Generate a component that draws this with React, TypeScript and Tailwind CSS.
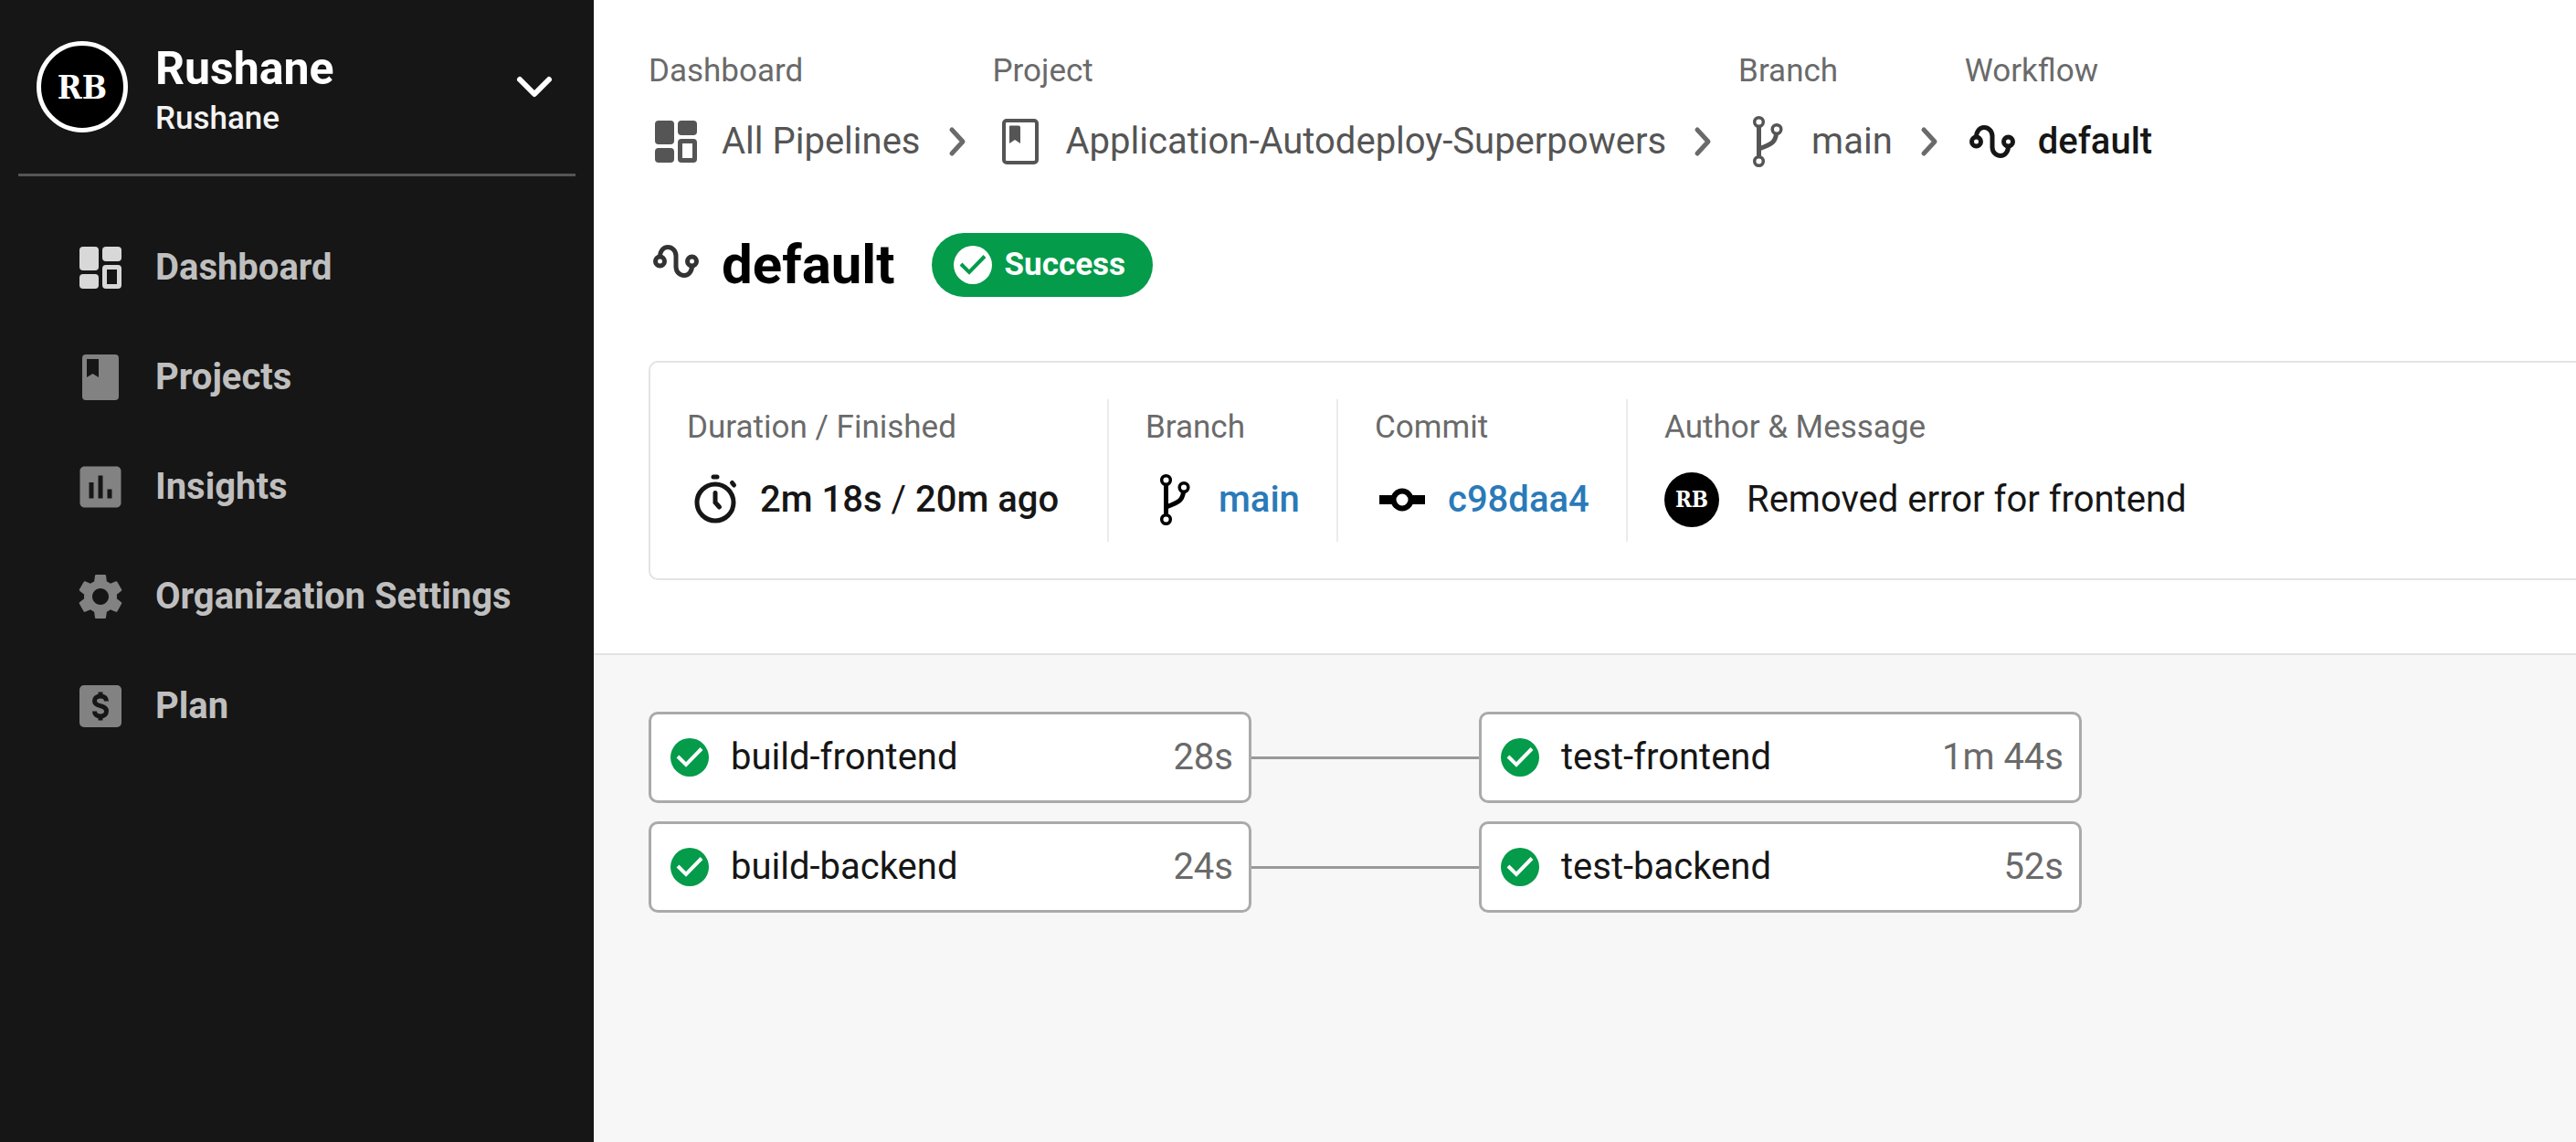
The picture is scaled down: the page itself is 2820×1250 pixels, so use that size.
import type { ReactNode } from "react";
import { MdAssessment, MdSettings } from "react-icons/md";

type IconProps = { className?: string };

function DashboardIcon({ className = "" }: IconProps) {
  return (
    <svg viewBox="0 0 60 60" className={`size-[60px] shrink-0 ${className}`} fill="currentColor" aria-hidden="true">
      <rect x="7" y="7" width="21" height="26" rx="4" />
      <rect x="7" y="37" width="21" height="16" rx="4" />
      <rect x="32" y="7" width="21" height="16" rx="4" />
      <path
        fillRule="evenodd"
        d="M36 27h13a4 4 0 0 1 4 4v18a4 4 0 0 1-4 4H36a4 4 0 0 1-4-4V31a4 4 0 0 1 4-4zm1 5v16h11V32z"
      />
    </svg>
  );
}

function ProjectIcon({ className = "" }: IconProps) {
  return (
    <svg viewBox="0 0 60 60" className={`size-[60px] shrink-0 ${className}`} fill="currentColor" aria-hidden="true">
      <path
        fillRule="evenodd"
        d="M14 5h32a4 4 0 0 1 4 4v42a4 4 0 0 1-4 4H14a4 4 0 0 1-4-4V9a4 4 0 0 1 4-4zm1 5v20l6.5-4 6.500 4V10z"
      />
    </svg>
  );
}

function ProjectOutlineIcon({ className = "" }: IconProps) {
  return (
    <svg viewBox="0 0 60 60" className={`size-[60px] shrink-0 ${className}`} aria-hidden="true">
      <rect x="12" y="7" width="36" height="46" rx="3" fill="none" stroke="currentColor" strokeWidth="4" />
      <path d="M19 12.500h9a2 2 0 0 1 2 2V32l-6-4-6 4V13.500a1 1 0 0 1 1-1z" fill="currentColor" />
    </svg>
  );
}

function PlanIcon({ className = "" }: IconProps) {
  return (
    <svg viewBox="0 0 60 60" className={`size-[60px] shrink-0 ${className}`} aria-hidden="true">
      <rect x="7" y="7" width="46" height="46" rx="5" fill="currentColor" />
      <path
        d="M36.500 24.500c0-3.500-2.500-5.500-6.500-5.500s-6.500 2-6.500 5.200c0 3.300 3 4.600 6.500 5.500s6.500 2.200 6.500 5.600c0 3.400-2.500 5.700-6.500 5.700s-6.500-2.200-6.500-5.500M30 14.500v5M30 41v4.500"
        fill="none"
        stroke="#161616"
        strokeWidth="5"
      />
    </svg>
  );
}

function WorkflowIcon({ className = "" }: IconProps) {
  return (
    <svg viewBox="0 0 60 60" className={`size-[60px] shrink-0 ${className}`} fill="none" stroke="currentColor" strokeWidth="5" aria-hidden="true">
      <circle cx="12.500" cy="30" r="5" />
      <circle cx="47.500" cy="30" r="5" />
      <path d="M12.500 25c0-6 3.500-10.500 8.500-10.500s9 4 9 9.500v12c0 5.500 4 9.500 9 9.500s8.500-4.500 8.500-10.500" />
    </svg>
  );
}

function BranchIcon({ className = "" }: IconProps) {
  return (
    <svg viewBox="0 0 60 60" className={`size-[60px] shrink-0 ${className}`} fill="none" stroke="currentColor" aria-hidden="true">
      <circle cx="22.500" cy="8.500" r="4.800" strokeWidth="3.500" />
      <circle cx="42" cy="16.500" r="4.800" strokeWidth="3.500" />
      <circle cx="22.500" cy="51.500" r="4.800" strokeWidth="3.500" />
      <path d="M22.500 13.500v33M22.500 38c11-4 18-6 19-16.500" strokeWidth="5" />
    </svg>
  );
}

function CommitIcon() {
  return (
    <svg viewBox="0 0 60 60" className="size-[60px] shrink-0" fill="none" stroke="#000" aria-hidden="true">
      <circle cx="30" cy="30" r="9.500" strokeWidth="6" />
      <path d="M5 30h15M40 30h15" strokeWidth="10" />
    </svg>
  );
}

function StopwatchIcon() {
  return (
    <svg viewBox="0 0 60 60" className="size-[60px] shrink-0" fill="none" stroke="#161616" strokeWidth="5" strokeLinecap="round" aria-hidden="true">
      <circle cx="31" cy="33" r="20" />
      <path d="M29 5h4M49.500 11.500l2 2.500M31 22.500V33l4.500 5" />
    </svg>
  );
}

function ChevronRight() {
  return (
    <svg
      viewBox="0 0 20 60"
      className="h-[60px] w-5 shrink-0 text-[#6a6a6a]"
      fill="none"
      stroke="currentColor"
      strokeWidth="5"
      strokeLinecap="round"
      strokeLinejoin="round"
      aria-hidden="true"
    >
      <path d="M4 17l12 13L4 43" />
    </svg>
  );
}

function CheckCircle({ circle, tick }: { circle: string; tick: string }) {
  return (
    <svg viewBox="0 0 42 42" className="size-[42px] shrink-0" aria-hidden="true">
      <circle cx="21" cy="21" r="21" fill={circle} />
      <path d="M8 20l9 9L34 11.500" fill="none" stroke={tick} strokeWidth="4" />
    </svg>
  );
}

const GREEN = "#049b4a";

const navItems: { label: string; icon: ReactNode }[] = [
  { label: "Dashboard", icon: <DashboardIcon className="text-[#d8d8d8]" /> },
  { label: "Projects", icon: <ProjectIcon className="text-[#828282]" /> },
  { label: "Insights", icon: <MdAssessment className="size-[60px] shrink-0 text-[#828282]" aria-hidden="true" /> },
  { label: "Organization Settings", icon: <MdSettings className="size-[60px] shrink-0 text-[#828282]" aria-hidden="true" /> },
  { label: "Plan", icon: <PlanIcon className="text-[#828282]" /> },
];

function Sidebar() {
  return (
    <aside className="w-[650px] shrink-0 bg-[#161616] px-5">
      <button type="button" className="flex h-[193px] w-full items-center gap-[30px] border-b-3 border-[#555] px-5 text-left">
        <span className="flex size-[100px] shrink-0 items-center justify-center rounded-full border-5 border-white bg-black font-['DejaVu_Serif_Condensed','DejaVu_Serif',serif] text-[36px] font-bold text-white">
          RB
        </span>
        <span className="flex grow flex-col pt-2.5">
          <span className="text-[50px] leading-[60px] font-bold text-white">Rushane</span>
          <span className="text-[35px] leading-[50px] font-medium text-[#f3f3f3]">Rushane</span>
        </span>
        <svg viewBox="0 0 50 50" className="size-[50px] shrink-0" fill="none" stroke="#fff" strokeWidth="6" strokeLinecap="round" strokeLinejoin="round" aria-hidden="true">
          <path d="M9 17l16 16 16-16" />
        </svg>
      </button>
      <nav aria-label="Main" className="flex flex-col pt-10 pl-[60px]">
        {navItems.map((item) => (
          <a key={item.label} href="#" className="flex h-[120px] items-center gap-[30px] text-[40px] font-bold text-[#bfbfbf]">
            {item.icon}
            {item.label}
          </a>
        ))}
      </nav>
    </aside>
  );
}

function Crumb({ label, icon, text, current = false }: { label: string; icon: ReactNode; text: string; current?: boolean }) {
  return (
    <li className="flex items-end gap-[30px]">
      <div className="flex flex-col">
        <span className="text-[35px] leading-[50px] text-[#6a6a6a]">{label}</span>
        <a
          href="#"
          aria-current={current ? "page" : undefined}
          className={
            current
              ? "mt-[22px] flex items-center gap-5 text-[40px] leading-[60px] font-medium text-[#161616]"
              : "mt-[22px] flex items-center gap-5 text-[40px] leading-[60px] text-[#555]"
          }
        >
          {icon}
          {text}
        </a>
      </div>
      {!current && <ChevronRight />}
    </li>
  );
}

function Fact({ label, width, children }: { label: string; width: string; children: ReactNode }) {
  return (
    <div className={`flex h-[156px] flex-col px-10 pt-1.5 ${width}`}>
      <dt className="text-[35px] leading-[50px] whitespace-nowrap text-[#6a6a6a]">{label}</dt>
      <dd className="mt-6 flex items-center gap-5 text-[40px] leading-[60px] whitespace-nowrap text-[#161616]">{children}</dd>
    </div>
  );
}

function Job({ name, time }: { name: string; time: string }) {
  return (
    <a href="#" className="flex h-[100px] w-[660px] items-center gap-6 rounded-[10px] border-3 border-[#aaa] bg-white pr-[17px] pl-[21px] text-[40px]">
      <CheckCircle circle={GREEN} tick="#fff" />
      <span className="grow text-[#161616]">{name}</span>
      <span className="text-[#6a6a6a]">{time}</span>
    </a>
  );
}

const pipelines = [
  [
    { name: "build-frontend", time: "28s" },
    { name: "test-frontend", time: "1m 44s" },
  ],
  [
    { name: "build-backend", time: "24s" },
    { name: "test-backend", time: "52s" },
  ],
];

export default function App() {
  return (
    <div className="flex min-h-screen overflow-hidden bg-[#f7f7f7] font-[Roboto,sans-serif]">
      <Sidebar />
      <main className="min-w-0 grow">
        <header className="border-b-2 border-[#e3e3e3] bg-white pt-[53px] pb-20 pl-[60px]">
          <nav aria-label="Breadcrumb">
            <ol className="flex items-end gap-[29px]">
              <Crumb label="Dashboard" icon={<DashboardIcon />} text="All Pipelines" />
              <Crumb label="Project" icon={<ProjectOutlineIcon />} text="Application-Autodeploy-Superpowers" />
              <Crumb label="Branch" icon={<BranchIcon />} text="main" />
              <Crumb label="Workflow" icon={<WorkflowIcon />} text="default" current />
            </ol>
          </nav>
          <div className="mt-[70px] flex h-[70px] items-center">
            <WorkflowIcon className="mb-2 text-[#333]" />
            <h1 className="ml-5 text-[60px] leading-[70px] font-bold text-black">default</h1>
            <span className="ml-10 flex h-[70px] items-center gap-[14px] rounded-full bg-[#049b4a] pr-[30px] pl-6 text-[35px] font-bold text-white">
              <CheckCircle circle="#fff" tick={GREEN} />
              Success
            </span>
          </div>
          <dl className="mt-[70px] flex divide-x-2 divide-[#ebebeb] rounded-l-[10px] border-2 border-r-0 border-[#e3e3e3] py-10">
            <Fact label="Duration / Finished" width="min-w-[502px]">
              <StopwatchIcon />
              <span>
                <span className="font-medium">2m 18s</span> / <span className="font-medium">20m ago</span>
              </span>
            </Fact>
            <Fact label="Branch" width="min-w-[251px]">
              <BranchIcon className="text-black" />
              <a href="#" className="font-medium text-[#2a7ab9]">main</a>
            </Fact>
            <Fact label="Commit" width="min-w-[317px]">
              <CommitIcon />
              <a href="#" className="font-medium text-[#2a7ab9]">c98daa4</a>
            </Fact>
            <Fact label="Author & Message" width="grow">
              <span className="mr-2.5 flex size-[60px] shrink-0 items-center justify-center rounded-full bg-black font-['DejaVu_Serif_Condensed','DejaVu_Serif',serif] text-2xl font-bold text-white">
                RB
              </span>
              Removed error for frontend
            </Fact>
          </dl>
        </header>
        <section aria-label="Jobs" className="flex flex-col gap-5 pt-[62px] pl-[60px]">
          {pipelines.map((jobs) => (
            <div key={jobs[0].name} className="flex items-center">
              <Job name={jobs[0].name} time={jobs[0].time} />
              <div className="h-[3px] w-[249px] bg-[#999]" />
              <Job name={jobs[1].name} time={jobs[1].time} />
            </div>
          ))}
        </section>
      </main>
    </div>
  );
}
